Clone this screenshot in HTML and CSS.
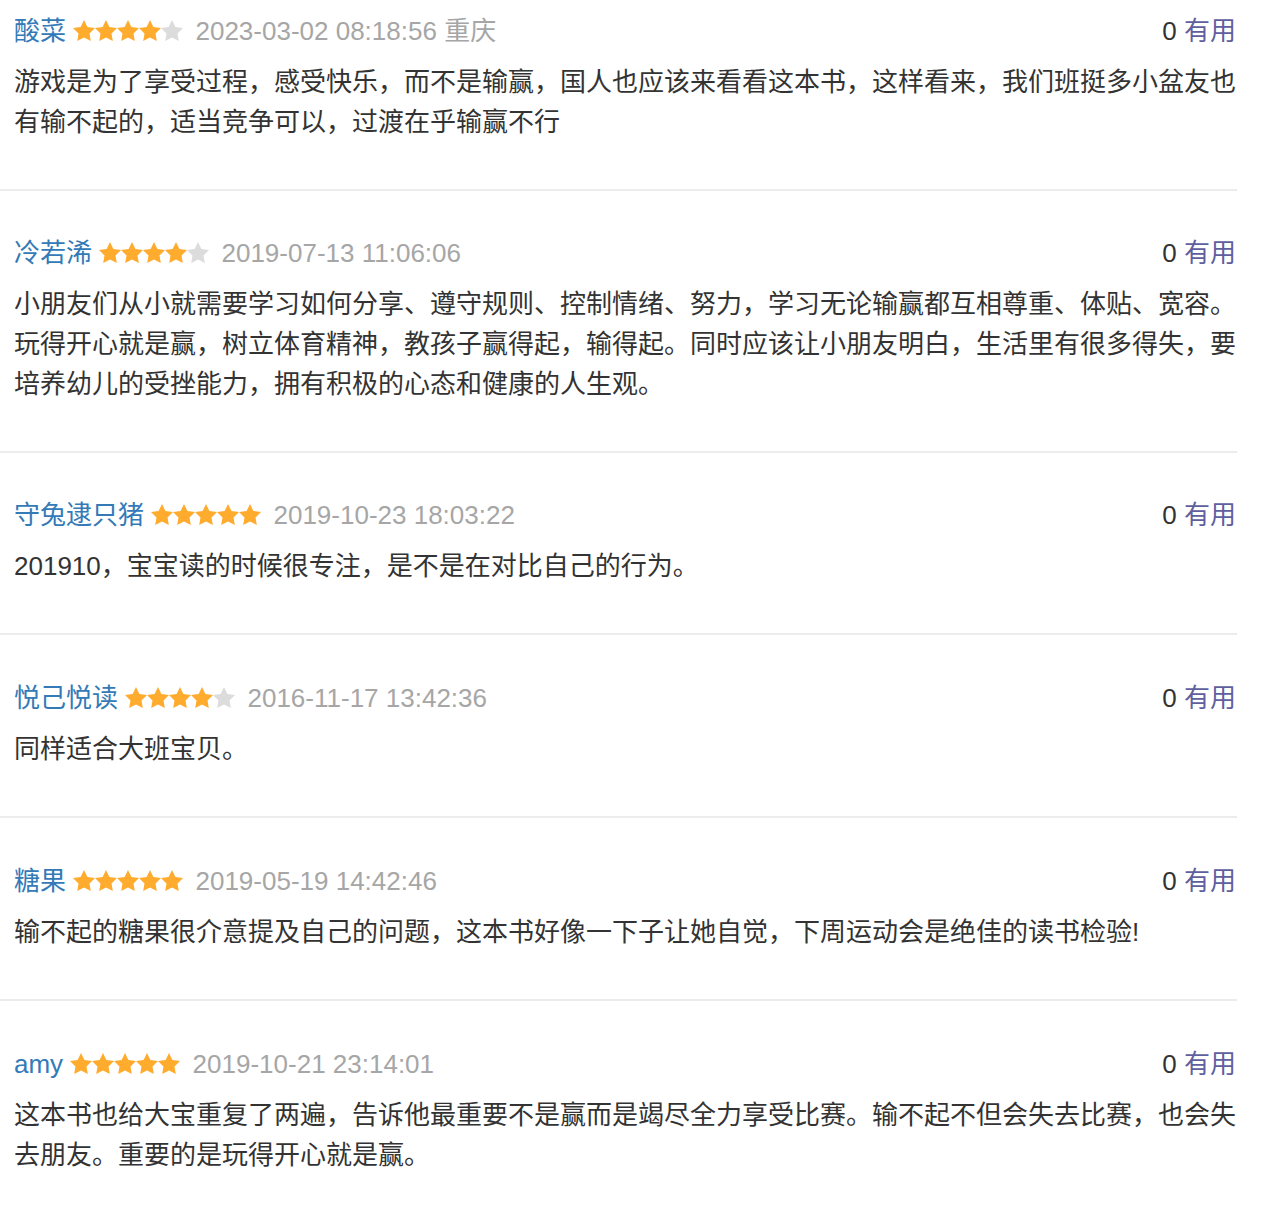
FILE: index.html
```html
<!DOCTYPE html>
<html lang="zh-CN">
<head>
<meta charset="utf-8">
<title>评论</title>
<link rel="stylesheet" href="styles.css">
</head>
<body>
<div class="reviews">

  <div class="review">
    <div class="review-head">
      <div class="meta">
        <a class="name">酸菜</a>
        <span class="stars">
          <svg class="star on" viewBox="2 2 20 19"><path d="M12 2l3.09 6.26L22 9.27l-5 4.87 1.18 6.88L12 17.77l-6.18 3.25L7 14.14 2 9.27l6.91-1.01L12 2z"/></svg><svg class="star on" viewBox="2 2 20 19"><path d="M12 2l3.09 6.26L22 9.27l-5 4.87 1.18 6.88L12 17.77l-6.18 3.25L7 14.14 2 9.27l6.91-1.01L12 2z"/></svg><svg class="star on" viewBox="2 2 20 19"><path d="M12 2l3.09 6.26L22 9.27l-5 4.87 1.18 6.88L12 17.77l-6.18 3.25L7 14.14 2 9.27l6.91-1.01L12 2z"/></svg><svg class="star on" viewBox="2 2 20 19"><path d="M12 2l3.09 6.26L22 9.27l-5 4.87 1.18 6.88L12 17.77l-6.18 3.25L7 14.14 2 9.27l6.91-1.01L12 2z"/></svg><svg class="star" viewBox="2 2 20 19"><path d="M12 2l3.09 6.26L22 9.27l-5 4.87 1.18 6.88L12 17.77l-6.18 3.25L7 14.14 2 9.27l6.91-1.01L12 2z"/></svg>
        </span>
        <span class="date">2023-03-02 08:18:56 重庆</span>
      </div>
      <div class="useful"><span class="count">0</span> <a class="useful-link">有用</a></div>
    </div>
    <p class="content">游戏是为了享受过程，感受快乐，而不是输赢，国人也应该来看看这本书，这样看来，我们班挺多小盆友也<br>有输不起的，适当竞争可以，过渡在乎输赢不行</p>
  </div>

  <div class="review">
    <div class="review-head">
      <div class="meta">
        <a class="name">冷若浠</a>
        <span class="stars">
          <svg class="star on" viewBox="2 2 20 19"><path d="M12 2l3.09 6.26L22 9.27l-5 4.87 1.18 6.88L12 17.77l-6.18 3.25L7 14.14 2 9.27l6.91-1.01L12 2z"/></svg><svg class="star on" viewBox="2 2 20 19"><path d="M12 2l3.09 6.26L22 9.27l-5 4.87 1.18 6.88L12 17.77l-6.18 3.25L7 14.14 2 9.27l6.91-1.01L12 2z"/></svg><svg class="star on" viewBox="2 2 20 19"><path d="M12 2l3.09 6.26L22 9.27l-5 4.87 1.18 6.88L12 17.77l-6.18 3.25L7 14.14 2 9.27l6.91-1.01L12 2z"/></svg><svg class="star on" viewBox="2 2 20 19"><path d="M12 2l3.09 6.26L22 9.27l-5 4.87 1.18 6.88L12 17.77l-6.18 3.25L7 14.14 2 9.27l6.91-1.01L12 2z"/></svg><svg class="star" viewBox="2 2 20 19"><path d="M12 2l3.09 6.26L22 9.27l-5 4.87 1.18 6.88L12 17.77l-6.18 3.25L7 14.14 2 9.27l6.91-1.01L12 2z"/></svg>
        </span>
        <span class="date">2019-07-13 11:06:06</span>
      </div>
      <div class="useful"><span class="count">0</span> <a class="useful-link">有用</a></div>
    </div>
    <p class="content">小朋友们从小就需要学习如何分享、遵守规则、控制情绪、努力，学习无论输赢都互相尊重、体贴、宽容。玩得开心就是赢，树立体育精神，教孩子赢得起，输得起。同时应该让小朋友明白，生活里有很多得失，要培养幼儿的受挫能力，拥有积极的心态和健康的人生观。</p>
  </div>

  <div class="review">
    <div class="review-head">
      <div class="meta">
        <a class="name">守兔逮只猪</a>
        <span class="stars">
          <svg class="star on" viewBox="2 2 20 19"><path d="M12 2l3.09 6.26L22 9.27l-5 4.87 1.18 6.88L12 17.77l-6.18 3.25L7 14.14 2 9.27l6.91-1.01L12 2z"/></svg><svg class="star on" viewBox="2 2 20 19"><path d="M12 2l3.09 6.26L22 9.27l-5 4.87 1.18 6.88L12 17.77l-6.18 3.25L7 14.14 2 9.27l6.91-1.01L12 2z"/></svg><svg class="star on" viewBox="2 2 20 19"><path d="M12 2l3.09 6.26L22 9.27l-5 4.87 1.18 6.88L12 17.77l-6.18 3.25L7 14.14 2 9.27l6.91-1.01L12 2z"/></svg><svg class="star on" viewBox="2 2 20 19"><path d="M12 2l3.09 6.26L22 9.27l-5 4.87 1.18 6.88L12 17.77l-6.18 3.25L7 14.14 2 9.27l6.91-1.01L12 2z"/></svg><svg class="star on" viewBox="2 2 20 19"><path d="M12 2l3.09 6.26L22 9.27l-5 4.87 1.18 6.88L12 17.77l-6.18 3.25L7 14.14 2 9.27l6.91-1.01L12 2z"/></svg>
        </span>
        <span class="date">2019-10-23 18:03:22</span>
      </div>
      <div class="useful"><span class="count">0</span> <a class="useful-link">有用</a></div>
    </div>
    <p class="content">201910，宝宝读的时候很专注，是不是在对比自己的行为。</p>
  </div>

  <div class="review">
    <div class="review-head">
      <div class="meta">
        <a class="name">悦己悦读</a>
        <span class="stars">
          <svg class="star on" viewBox="2 2 20 19"><path d="M12 2l3.09 6.26L22 9.27l-5 4.87 1.18 6.88L12 17.77l-6.18 3.25L7 14.14 2 9.27l6.91-1.01L12 2z"/></svg><svg class="star on" viewBox="2 2 20 19"><path d="M12 2l3.09 6.26L22 9.27l-5 4.87 1.18 6.88L12 17.77l-6.18 3.25L7 14.14 2 9.27l6.91-1.01L12 2z"/></svg><svg class="star on" viewBox="2 2 20 19"><path d="M12 2l3.09 6.26L22 9.27l-5 4.87 1.18 6.88L12 17.77l-6.18 3.25L7 14.14 2 9.27l6.91-1.01L12 2z"/></svg><svg class="star on" viewBox="2 2 20 19"><path d="M12 2l3.09 6.26L22 9.27l-5 4.87 1.18 6.88L12 17.77l-6.18 3.25L7 14.14 2 9.27l6.91-1.01L12 2z"/></svg><svg class="star" viewBox="2 2 20 19"><path d="M12 2l3.09 6.26L22 9.27l-5 4.87 1.18 6.88L12 17.77l-6.18 3.25L7 14.14 2 9.27l6.91-1.01L12 2z"/></svg>
        </span>
        <span class="date">2016-11-17 13:42:36</span>
      </div>
      <div class="useful"><span class="count">0</span> <a class="useful-link">有用</a></div>
    </div>
    <p class="content">同样适合大班宝贝。</p>
  </div>

  <div class="review">
    <div class="review-head">
      <div class="meta">
        <a class="name">糖果</a>
        <span class="stars">
          <svg class="star on" viewBox="2 2 20 19"><path d="M12 2l3.09 6.26L22 9.27l-5 4.87 1.18 6.88L12 17.77l-6.18 3.25L7 14.14 2 9.27l6.91-1.01L12 2z"/></svg><svg class="star on" viewBox="2 2 20 19"><path d="M12 2l3.09 6.26L22 9.27l-5 4.87 1.18 6.88L12 17.77l-6.18 3.25L7 14.14 2 9.27l6.91-1.01L12 2z"/></svg><svg class="star on" viewBox="2 2 20 19"><path d="M12 2l3.09 6.26L22 9.27l-5 4.87 1.18 6.88L12 17.77l-6.18 3.25L7 14.14 2 9.27l6.91-1.01L12 2z"/></svg><svg class="star on" viewBox="2 2 20 19"><path d="M12 2l3.09 6.26L22 9.27l-5 4.87 1.18 6.88L12 17.77l-6.18 3.25L7 14.14 2 9.27l6.91-1.01L12 2z"/></svg><svg class="star on" viewBox="2 2 20 19"><path d="M12 2l3.09 6.26L22 9.27l-5 4.87 1.18 6.88L12 17.77l-6.18 3.25L7 14.14 2 9.27l6.91-1.01L12 2z"/></svg>
        </span>
        <span class="date">2019-05-19 14:42:46</span>
      </div>
      <div class="useful"><span class="count">0</span> <a class="useful-link">有用</a></div>
    </div>
    <p class="content">输不起的糖果很介意提及自己的问题，这本书好像一下子让她自觉，下周运动会是绝佳的读书检验!</p>
  </div>

  <div class="review">
    <div class="review-head">
      <div class="meta">
        <a class="name">amy</a>
        <span class="stars">
          <svg class="star on" viewBox="2 2 20 19"><path d="M12 2l3.09 6.26L22 9.27l-5 4.87 1.18 6.88L12 17.77l-6.18 3.25L7 14.14 2 9.27l6.91-1.01L12 2z"/></svg><svg class="star on" viewBox="2 2 20 19"><path d="M12 2l3.09 6.26L22 9.27l-5 4.87 1.18 6.88L12 17.77l-6.18 3.25L7 14.14 2 9.27l6.91-1.01L12 2z"/></svg><svg class="star on" viewBox="2 2 20 19"><path d="M12 2l3.09 6.26L22 9.27l-5 4.87 1.18 6.88L12 17.77l-6.18 3.25L7 14.14 2 9.27l6.91-1.01L12 2z"/></svg><svg class="star on" viewBox="2 2 20 19"><path d="M12 2l3.09 6.26L22 9.27l-5 4.87 1.18 6.88L12 17.77l-6.18 3.25L7 14.14 2 9.27l6.91-1.01L12 2z"/></svg><svg class="star on" viewBox="2 2 20 19"><path d="M12 2l3.09 6.26L22 9.27l-5 4.87 1.18 6.88L12 17.77l-6.18 3.25L7 14.14 2 9.27l6.91-1.01L12 2z"/></svg>
        </span>
        <span class="date">2019-10-21 23:14:01</span>
      </div>
      <div class="useful"><span class="count">0</span> <a class="useful-link">有用</a></div>
    </div>
    <p class="content">这本书也给大宝重复了两遍，告诉他最重要不是赢而是竭尽全力享受比赛。输不起不但会失去比赛，也会失去朋友。重要的是玩得开心就是赢。</p>
  </div>

</div>
</body>
</html>
```

FILE: styles.css
```css
html, body {
  margin: 0;
  padding: 0;
  background: #fff;
}

body {
  font-family: "Liberation Sans", "Noto Sans CJK SC", sans-serif;
  font-size: 26px;
  color: #333;
}

.reviews {
  width: 1237px;
}

.review {
  padding: 42px 1px 47px 14px;
  border-bottom: 2px solid #ececec;
}

.review:first-child {
  padding-top: 11px;
}

.review:nth-child(n+4) {
  padding-top: 43px;
}

.review:last-child {
  border-bottom: none;
}

.review-head {
  display: flex;
  justify-content: space-between;
  align-items: center;
  line-height: 40px;
  height: 40px;
}

.meta {
  white-space: nowrap;
}

.name {
  color: #337ab7;
  text-decoration: none;
}

.stars {
  display: inline-flex;
  vertical-align: -1px;
  margin-right: 5px;
}

.star {
  width: 22px;
  height: 21px;
  fill: #dcdcdc;
}

.star.on {
  fill: #ffab2e;
}

.date {
  color: #a6a6a6;
}

.useful {
  white-space: nowrap;
}

.count {
  color: #333;
}

.useful-link {
  color: #5f5f9e;
  text-decoration: none;
}

.content {
  margin: 11px 0 0;
  line-height: 40px;
  text-align: justify;
}
```
